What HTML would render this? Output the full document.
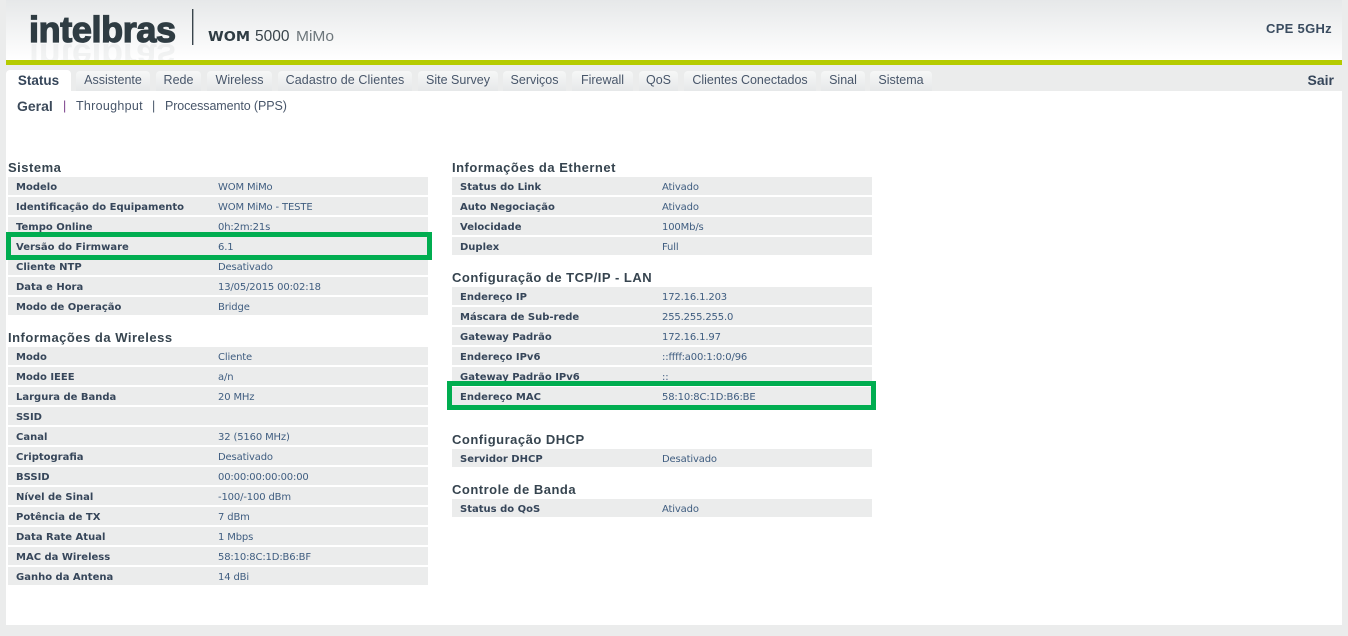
<!DOCTYPE html>
<html lang="pt"><head><meta charset="utf-8"><title>WOM 5000 MiMo</title>
<style>
html,body{margin:0;padding:0}
body{width:1348px;height:636px;position:relative;overflow:hidden;background:#ebecec;font-family:"DejaVu Sans",sans-serif;color:#3c4a5a}
div,span{position:absolute;white-space:nowrap}
#hd{left:6px;top:0;width:1336px;height:60px;background:linear-gradient(#e6e8e9,#fff)}
#bar{left:6px;top:60px;width:1336px;height:5px;background:#b5cb00}
#main{left:6px;top:91px;width:1336px;height:534px;background:#fff}
.tab{top:71px;height:20px;border-radius:4px 4px 0 0;background:linear-gradient(#f6f7f7,#e6e8e9);font:12.5px/19px "Liberation Sans",sans-serif;color:#48566a;text-align:center}
.tab.on{top:70px;height:21px;background:#fff;font:bold 13.5px/21px "Liberation Sans",sans-serif;color:#36465a}
.sub{top:98px;font:12.5px/16px "Liberation Sans",sans-serif;color:#48566a}
.h{font:bold 13px/16px "Liberation Sans",sans-serif;color:#36444f;letter-spacing:.5px}
.r{height:18px;width:420px;background:#ebecec}
.l{left:8px;top:2px;font:bold 10px/18px "DejaVu Sans",sans-serif;color:#36465a}
.v{left:210px;top:2px;font:10px/18px "DejaVu Sans",sans-serif;color:#3f5d80;letter-spacing:-.15px}
.box{border:5px solid #00ad50;box-sizing:border-box}
</style></head><body>
<div id="hd"></div>
<svg style="position:absolute;left:0;top:0" width="360" height="60">
<text x="29" y="42" font-family="Liberation Sans" font-weight="bold" font-size="36" textLength="147" lengthAdjust="spacing" fill="#2f3c43" stroke="#2f3c43" stroke-width="1.3">intelbras</text>
<text transform="translate(0,86) scale(1,-1)" x="29" y="42" font-family="Liberation Sans" font-weight="bold" font-size="36" textLength="147" lengthAdjust="spacing" fill="#2f3c43" opacity=".05">intelbras</text>
<rect x="192" y="9" width="1.4" height="36" fill="#3a454c"/>
<text x="208" y="41" font-family="DejaVu Sans" font-weight="bold" font-size="13.5" textLength="42" lengthAdjust="spacingAndGlyphs" fill="#2f3c43">WOM</text>
<text x="255" y="41" font-family="Liberation Sans" font-size="15.5" fill="#3a454c">5000</text>
<text x="296" y="41" font-family="Liberation Sans" font-size="15" fill="#6d767b" textLength="38" lengthAdjust="spacingAndGlyphs">MiMo</text>
</svg>
<div style="right:16px;top:21px;font:bold 13px/16px 'Liberation Sans',sans-serif;color:#3a4c60;letter-spacing:.3px">CPE 5GHz</div>
<div id="bar"></div>
<div id="main"></div>
<div class="tab on" style="left:6px;width:65px">Status</div>
<div class="tab" style="left:76px;width:74px">Assistente</div>
<div class="tab" style="left:156px;width:45px">Rede</div>
<div class="tab" style="left:207px;width:65px">Wireless</div>
<div class="tab" style="left:278px;width:134px;letter-spacing:.1px">Cadastro de Clientes</div>
<div class="tab" style="left:418px;width:80px">Site Survey</div>
<div class="tab" style="left:503px;width:63px">Serviços</div>
<div class="tab" style="left:572px;width:61px">Firewall</div>
<div class="tab" style="left:639px;width:39px">QoS</div>
<div class="tab" style="left:684px;width:132px">Clientes Conectados</div>
<div class="tab" style="left:821px;width:44px">Sinal</div>
<div class="tab" style="left:870px;width:62px">Sistema</div>
<div style="right:14px;top:72px;font:bold 14px/16px 'Liberation Sans',sans-serif;color:#36465a">Sair</div>
<div class="sub" style="left:17px;font-weight:bold;font-size:14px;color:#3c4a5a">Geral</div>
<div class="sub" style="left:63px;color:#7a3f8a">|</div>
<div class="sub" style="left:76px;letter-spacing:.3px">Throughput</div>
<div class="sub" style="left:152px">|</div>
<div class="sub" style="left:165px;letter-spacing:-.1px">Processamento (PPS)</div>

<div class="h" style="left:8px;top:160px">Sistema</div>
<div class="r" style="left:8px;top:177px"><span class="l">Modelo</span><span class="v">WOM MiMo</span></div>
<div class="r" style="left:8px;top:197px"><span class="l">Identificação do Equipamento</span><span class="v">WOM MiMo - TESTE</span></div>
<div class="r" style="left:8px;top:217px"><span class="l">Tempo Online</span><span class="v">0h:2m:21s</span></div>
<div class="r" style="left:8px;top:237px"><span class="l">Versão do Firmware</span><span class="v">6.1</span></div>
<div class="r" style="left:8px;top:257px"><span class="l">Cliente NTP</span><span class="v">Desativado</span></div>
<div class="r" style="left:8px;top:277px"><span class="l">Data e Hora</span><span class="v">13/05/2015 00:02:18</span></div>
<div class="r" style="left:8px;top:297px"><span class="l">Modo de Operação</span><span class="v">Bridge</span></div>

<div class="h" style="left:8px;top:330px">Informações da Wireless</div>
<div class="r" style="left:8px;top:347px"><span class="l">Modo</span><span class="v">Cliente</span></div>
<div class="r" style="left:8px;top:367px"><span class="l">Modo IEEE</span><span class="v">a/n</span></div>
<div class="r" style="left:8px;top:387px"><span class="l">Largura de Banda</span><span class="v">20 MHz</span></div>
<div class="r" style="left:8px;top:407px"><span class="l">SSID</span></div>
<div class="r" style="left:8px;top:427px"><span class="l">Canal</span><span class="v">32 (5160 MHz)</span></div>
<div class="r" style="left:8px;top:447px"><span class="l">Criptografia</span><span class="v">Desativado</span></div>
<div class="r" style="left:8px;top:467px"><span class="l">BSSID</span><span class="v">00:00:00:00:00:00</span></div>
<div class="r" style="left:8px;top:487px"><span class="l">Nível de Sinal</span><span class="v">-100/-100 dBm</span></div>
<div class="r" style="left:8px;top:507px"><span class="l">Potência de TX</span><span class="v">7 dBm</span></div>
<div class="r" style="left:8px;top:527px"><span class="l">Data Rate Atual</span><span class="v">1 Mbps</span></div>
<div class="r" style="left:8px;top:547px"><span class="l">MAC da Wireless</span><span class="v">58:10:8C:1D:B6:BF</span></div>
<div class="r" style="left:8px;top:567px"><span class="l">Ganho da Antena</span><span class="v">14 dBi</span></div>

<div class="h" style="left:452px;top:160px">Informações da Ethernet</div>
<div class="r" style="left:452px;top:177px"><span class="l">Status do Link</span><span class="v">Ativado</span></div>
<div class="r" style="left:452px;top:197px"><span class="l">Auto Negociação</span><span class="v">Ativado</span></div>
<div class="r" style="left:452px;top:217px"><span class="l">Velocidade</span><span class="v">100Mb/s</span></div>
<div class="r" style="left:452px;top:237px"><span class="l">Duplex</span><span class="v">Full</span></div>

<div class="h" style="left:452px;top:270px">Configuração de TCP/IP - LAN</div>
<div class="r" style="left:452px;top:287px"><span class="l">Endereço IP</span><span class="v">172.16.1.203</span></div>
<div class="r" style="left:452px;top:307px"><span class="l">Máscara de Sub-rede</span><span class="v">255.255.255.0</span></div>
<div class="r" style="left:452px;top:327px"><span class="l">Gateway Padrão</span><span class="v">172.16.1.97</span></div>
<div class="r" style="left:452px;top:347px"><span class="l">Endereço IPv6</span><span class="v">::ffff:a00:1:0:0/96</span></div>
<div class="r" style="left:452px;top:367px"><span class="l">Gateway Padrão IPv6</span><span class="v">::</span></div>
<div class="r" style="left:452px;top:387px"><span class="l">Endereço MAC</span><span class="v">58:10:8C:1D:B6:BE</span></div>

<div class="h" style="left:452px;top:432px">Configuração DHCP</div>
<div class="r" style="left:452px;top:449px"><span class="l">Servidor DHCP</span><span class="v">Desativado</span></div>

<div class="h" style="left:452px;top:482px">Controle de Banda</div>
<div class="r" style="left:452px;top:499px"><span class="l">Status do QoS</span><span class="v">Ativado</span></div>

<div class="box" style="left:6px;top:232px;width:426px;height:28px"></div>
<div class="box" style="left:447px;top:381px;width:429px;height:29px"></div>
</body></html>
